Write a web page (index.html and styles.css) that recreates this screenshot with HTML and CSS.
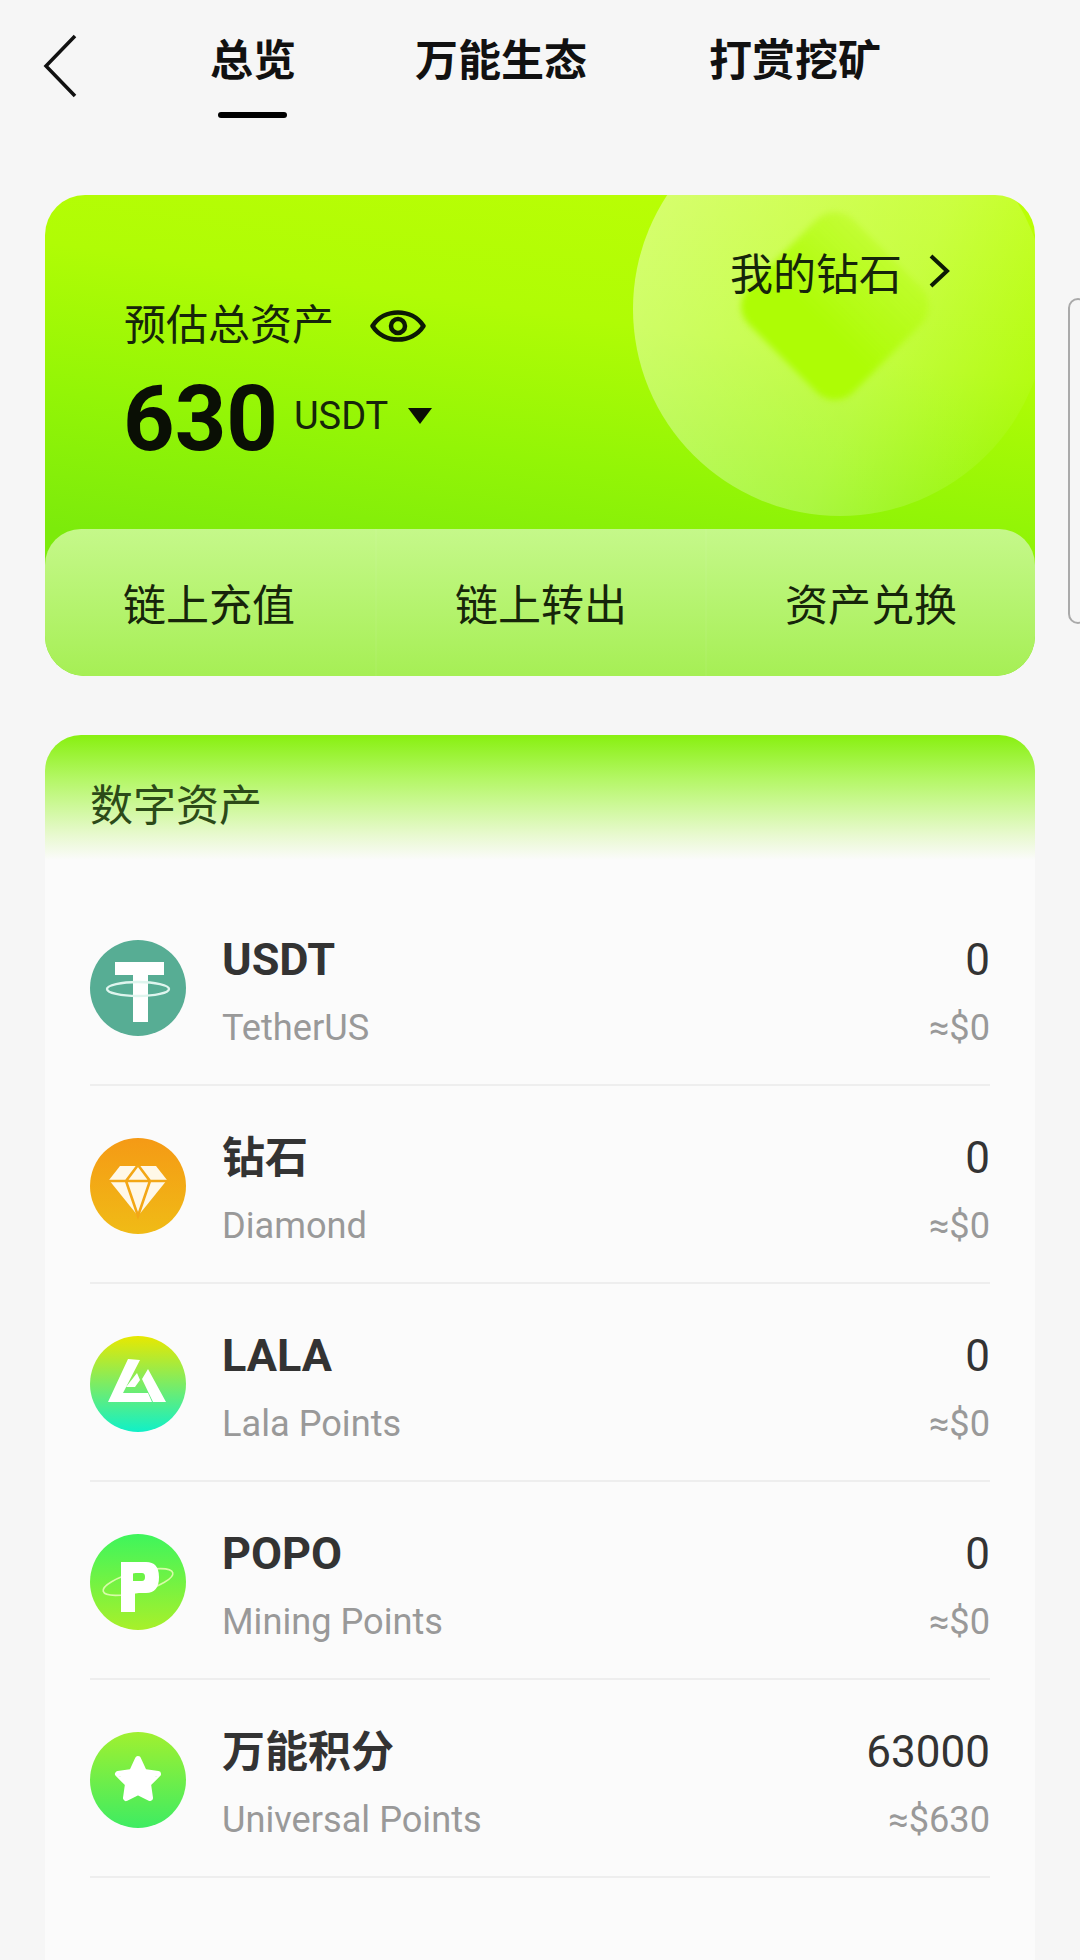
FILE: index.html
```html
<!DOCTYPE html>
<html lang="zh-CN">
<head>
    <meta charset="UTF-8">
    <meta name="viewport" content="width=device-width, initial-scale=1.0">
    <title>总览</title>
    <link rel="stylesheet" href="styles.css">
</head>
<body>
    <div class="navbar">
        <a class="back-btn" href="#" title="返回">
            <svg width="34" height="64" viewBox="0 0 34 64"><path d="M32 2 L3 32 L32 62" fill="none" stroke="#111" stroke-width="3.5"/></svg>
        </a>
        <div class="tabs">
            <a class="tab active" href="#">总览</a>
            <a class="tab" href="#">万能生态</a>
            <a class="tab" href="#">打赏挖矿</a>
        </div>
    </div>

    <div class="side-handle"></div>

    <div class="hero">
        <div class="hero-circle"></div>
        <div class="hero-diamond"></div>
        <div class="hero-top">
            <div class="hero-balance">
                <div class="hero-label">
                    <span>预估总资产</span>
                    <svg width="56" height="36" viewBox="0 0 56 36">
                        <path d="M2.5 18 C14 0 42 0 53.5 18 C42 36 14 36 2.5 18Z" fill="none" stroke="#0c1a04" stroke-width="4.5" stroke-linejoin="round"/>
                        <circle cx="28" cy="18" r="7" fill="none" stroke="#0c1a04" stroke-width="4.5"/>
                    </svg>
                </div>
                <div class="hero-amount">
                    <span class="amount-num">630</span>
                    <span class="amount-unit">USDT</span>
                    <span class="amount-caret"></span>
                </div>
            </div>
            <a class="hero-link" href="#">
                <span>我的钻石</span>
                <svg width="22" height="34" viewBox="0 0 22 34"><path d="M3 2 L19 17 L3 32" fill="none" stroke="#0c1a04" stroke-width="4"/></svg>
            </a>
        </div>
        <div class="hero-actions">
            <a href="#">链上充值</a>
            <a href="#">链上转出</a>
            <a href="#">资产兑换</a>
        </div>
    </div>

    <div class="assets">
        <h3>数字资产</h3>
        <div class="asset-list">
            <div class="asset-row">
                <svg class="coin" viewBox="0 0 96 96">
                    <circle cx="48" cy="48" r="48" fill="#57ad94"/>
                    <path d="M25 22 H74 V35 H58 V82 H43 V35 H25Z" fill="#fff"/>
                    <ellipse cx="48" cy="49" rx="31" ry="7" fill="none" stroke="#dff5ee" stroke-width="2.4"/>
                </svg>
                <div class="asset-name"><b>USDT</b><span>TetherUS</span></div>
                <div class="asset-value"><b>0</b><span>≈$0</span></div>
            </div>
            <div class="asset-row">
                <svg class="coin" viewBox="0 0 96 96">
                    <defs><linearGradient id="coinOrange" x1="0" y1="0" x2="0" y2="1"><stop offset="0" stop-color="#f59a15"/><stop offset="1" stop-color="#f0bb16"/></linearGradient></defs>
                    <circle cx="48" cy="48" r="48" fill="url(#coinOrange)"/>
                    <path d="M30 28 H66 L77 42 L48 78 L19 42Z" fill="#fff8e8"/>
                    <path d="M19 43 H77 M48 27 L36 43 L48 78 L60 43 L48 27" fill="none" stroke="#f3a716" stroke-width="2.6"/>
                </svg>
                <div class="asset-name"><b class="cn">钻石</b><span>Diamond</span></div>
                <div class="asset-value"><b>0</b><span>≈$0</span></div>
            </div>
            <div class="asset-row">
                <svg class="coin" viewBox="0 0 96 96">
                    <defs><linearGradient id="coinLala" x1="0" y1="0" x2="0" y2="1"><stop offset="0" stop-color="#e8e800"/><stop offset="1" stop-color="#10f0c8"/></linearGradient></defs>
                    <circle cx="48" cy="48" r="48" fill="url(#coinLala)"/>
                    <path d="M18 66 L38 23 L50 24 L33 57 L58 57 L62 66Z" fill="#fff"/>
                    <path d="M36 51 L47 37 L50 44 L45 51Z M52 43 L58 33 L76 66 L63 66Z" fill="#fff"/>
                </svg>
                <div class="asset-name"><b>LALA</b><span>Lala Points</span></div>
                <div class="asset-value"><b>0</b><span>≈$0</span></div>
            </div>
            <div class="asset-row">
                <svg class="coin" viewBox="0 0 96 96">
                    <defs><linearGradient id="coinPopo" x1="0" y1="0" x2="0" y2="1"><stop offset="0" stop-color="#3ef55c"/><stop offset="1" stop-color="#a8f02a"/></linearGradient></defs>
                    <circle cx="48" cy="48" r="48" fill="url(#coinPopo)"/>
                    <ellipse cx="48" cy="48" rx="36" ry="10" transform="rotate(-15 48 48)" fill="none" stroke="#d8fba8" stroke-width="1.6"/>
                    <path d="M31 28 H56 Q69 28 69 43 Q69 59 56 59 H45 V78 H31Z M43 39 V47 H52 Q55 47 55 43 Q55 39 52 39Z" fill="#fff" fill-rule="evenodd"/>
                </svg>
                <div class="asset-name"><b>POPO</b><span>Mining Points</span></div>
                <div class="asset-value"><b>0</b><span>≈$0</span></div>
            </div>
            <div class="asset-row">
                <svg class="coin" viewBox="0 0 96 96">
                    <defs><linearGradient id="coinStar" x1="0" y1="0" x2="0" y2="1"><stop offset="0" stop-color="#a0f030"/><stop offset="1" stop-color="#3eec62"/></linearGradient></defs>
                    <circle cx="48" cy="48" r="48" fill="url(#coinStar)"/>
                    <path d="M48 27 L54 40 L68 42 L58 52 L60 66 L48 60 L36 66 L38 52 L28 42 L42 40Z" fill="#fff" stroke="#fff" stroke-width="6" stroke-linejoin="round"/>
                </svg>
                <div class="asset-name"><b class="cn">万能积分</b><span>Universal Points</span></div>
                <div class="asset-value"><b>63000</b><span>≈$630</span></div>
            </div>
        </div>
    </div>
</body>
</html>
```
FILE: styles.css
```css
html, body { height: 100%; }
body { margin: 0; height: 1960px; overflow: hidden; background-color: #f6f6f6; color: #333; font-family: Roboto, "Noto Sans CJK SC", sans-serif; font-size: 43px; }
a { color: inherit; text-decoration: none; }

/* Top bar */
.navbar { display: flex; height: 120px; padding-left: 43px; }
.back-btn { display: block; padding-top: 34px; width: 167px; }
.tabs { display: flex; gap: 122px; }
.tab { position: relative; padding-top: 31px; font-size: 43px; font-weight: 700; line-height: 60px; color: #111; }
.tab.active { margin-right: -3px; }
.tab.active::after { content: ""; position: absolute; left: 8px; right: 9px; top: 112px; height: 6px; border-radius: 3px; background-color: #000; }

.side-handle { position: absolute; top: 298px; left: 1068px; width: 20px; height: 326px; border: 2px solid #aaa; border-radius: 10px; box-sizing: border-box; }

/* Balance card */
.hero { position: relative; margin: 75px 45px 0; height: 481px; border-radius: 40px; overflow: hidden; background: linear-gradient(188deg, #bcff04 0%, #b0fc05 30%, #93f506 54%, #7ceb0b 76%, #7ceb0b 100%); display: flex; flex-direction: column; }
.hero-circle { position: absolute; left: 588px; top: -93px; width: 414px; height: 414px; border-radius: 50%; background: linear-gradient(115deg, rgba(255,255,255,0.42) 10%, rgba(255,255,255,0.24) 60%, rgba(255,255,255,0) 95%); }
.hero-diamond { position: absolute; left: 716px; top: 37px; width: 148px; height: 148px; border-radius: 26px; transform: rotate(45deg); filter: blur(3px); background: linear-gradient(to top, #aefc05 35%, rgba(178,253,5,0.35) 100%); }
.hero-top { position: relative; flex: 1; display: flex; justify-content: space-between; padding: 0 85px 0 79px; }
.hero-label { display: flex; align-items: center; gap: 36px; margin-top: 100px; font-size: 42px; line-height: 62px; color: #16250a; }
.hero-amount { display: flex; align-items: center; margin: 7px 0 0 -1px; color: #0a0f05; }
.amount-num { margin: 4px 0 -4px; font-size: 90px; font-weight: 700; line-height: 104px; }
.amount-unit { margin-left: 16px; font-size: 38px; color: #16250a; }
.amount-caret { margin-left: 20px; width: 0; height: 0; border-style: solid; border-width: 16px 12px 0; border-color: #0a0f05 transparent transparent; }
.hero-link { display: flex; align-items: center; gap: 26px; height: 62px; margin-top: 45px; color: #16250a; }
.hero-actions { position: relative; display: grid; grid-template-columns: repeat(3, 1fr); height: 147px; border-radius: 36px; background: linear-gradient(180deg, #c5f88a 0%, #a6ef55 100%); }
.hero-actions a { display: flex; align-items: center; padding: 0 0 2px 78px; color: #16250a; border-left: 2px solid rgba(255,255,255,0.04); }
.hero-actions a:first-child { border-left: none; }

/* Asset list */
.assets { margin: 59px 45px 0; height: 1300px; border-radius: 36px 36px 0 0; background: linear-gradient(180deg, #88f010 0px, #b5f768 45px, #e8f9cf 100px, #fbfbfb 125px); }
.assets h3 { margin: 0; padding: 40px 0 0 45px; font-size: 43px; font-weight: 400; line-height: 62px; color: #2c4a18; height: 54px; }
.asset-list { margin: 59px 45px 0 45px; }
.asset-row { display: flex; align-items: center; height: 196px; border-bottom: 2px solid #eee; }
.coin { width: 96px; height: 96px; flex-shrink: 0; margin: 4px 36px 0 0; }
.asset-name, .asset-value { display: flex; flex-direction: column; gap: 19px; padding-top: 14px; }
.asset-name { flex: 1; }
.asset-value { align-items: flex-end; }
.asset-name b { font-size: 45px; font-weight: 700; line-height: 50px; color: #333; }
.asset-name b.cn { font-size: 43px; }
.asset-value b { font-size: 44px; font-weight: 400; line-height: 50px; color: #333; }
.asset-name span, .asset-value span { font-size: 36.2px; line-height: 48px; color: #999; }
```
